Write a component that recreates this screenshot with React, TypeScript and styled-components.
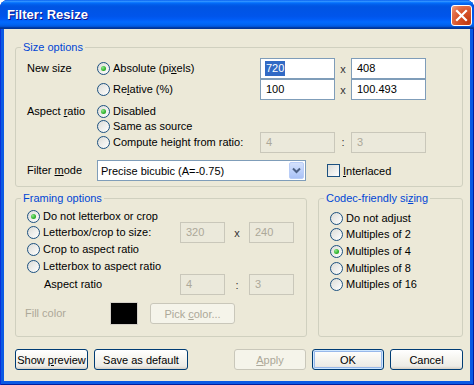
import styled, { createGlobalStyle } from 'styled-components'

const GlobalStyle = createGlobalStyle`
  html, body {
    margin: 0;
    padding: 0;
    background: #ffffff;
  }
  body {
    font-family: Tahoma, 'Liberation Sans', Arial, sans-serif;
    font-size: 11px;
    color: #000;
  }
  * {
    box-sizing: border-box;
  }
`

const Window = styled.div`
  width: 474px;
  height: 385px;
  display: flex;
  flex-direction: column;
  background: #0b5ae4;
  border-radius: 8px 8px 0 0;
  overflow: hidden;
  box-shadow: inset 1px 0 #0831d9, inset -1px 0 #001ea0, inset 0 -1px #001ea0;
`

const TitleBar = styled.div`
  height: 29px;
  flex: none;
  display: flex;
  align-items: center;
  justify-content: space-between;
  padding: 0 2px 0 7px;
  background: linear-gradient(
    180deg,
    #0058ee 0%,
    #3593ff 4%,
    #288eff 6%,
    #127dff 8%,
    #036ffc 10%,
    #0262ee 14%,
    #0057e5 20%,
    #0054e3 24%,
    #0055eb 56%,
    #005bf5 66%,
    #026afe 76%,
    #0062ef 86%,
    #0052d6 92%,
    #0040ab 94%,
    #003092 100%
  );
`

const Title = styled.span`
  color: #fff;
  font-family: 'Trebuchet MS', 'Liberation Sans', Arial, sans-serif;
  font-weight: bold;
  font-size: 13px;
  text-shadow: 1px 1px #0f1089;
`

const CloseButton = styled.div`
  width: 21px;
  height: 21px;
  margin-top: 1px;
  border: 1px solid #fff;
  border-radius: 3px;
  display: flex;
  align-items: center;
  justify-content: center;
  background: radial-gradient(circle at 85% 85%, #c23a10 0%, #d9552b 50%, #e3714c 75%, #f2a689 100%);
`

const Client = styled.div`
  flex: 1;
  margin: 0 4px 4px;
  background: #ece9d8;
  padding: 12px 7px 0 11px;
  display: flex;
  flex-direction: column;
`

const Group = styled.fieldset<{ $pad: string }>`
  margin: 0;
  min-width: 0;
  border: 1px solid #d0d0bf;
  border-radius: 3px;
  padding: ${({ $pad }) => $pad};
`

const Legend = styled.legend`
  margin-left: -6px;
  padding: 0 2px;
  color: #0046d5;
  line-height: 13px;
  font-size: 11px;
`

const SizeGrid = styled.div<{ $rows: string; $mt?: number }>`
  display: grid;
  grid-template-columns: 70px 163px 75px 16px 75px;
  grid-template-rows: ${({ $rows }) => $rows};
  align-items: center;
  margin-top: ${({ $mt }) => $mt ?? 0}px;
`

const FramingGrid = styled.div`
  display: grid;
  grid-template-columns: 153px 45px 24px 45px;
  grid-template-rows: 16px 17px 17px 16px 21px;
  align-items: center;
`

const CodecList = styled.div`
  display: grid;
  grid-template-rows: 16px 17px 17px 16px 17px;
  align-items: center;
`

const Label = styled.span<{ $disabled?: boolean; $indent?: number; $w?: number }>`
  white-space: nowrap;
  line-height: 13px;
  padding-left: ${({ $indent }) => $indent ?? 0}px;
  width: ${({ $w }) => ($w ? `${$w}px` : 'auto')};
  flex: none;
  color: ${({ $disabled }) => ($disabled ? '#aca899' : '#000')};
`

const Sep = styled.span`
  text-align: center;
  color: #333;
`

const Option = styled.label<{ $span?: string }>`
  display: flex;
  align-items: center;
  gap: 3px;
  white-space: nowrap;
  line-height: 13px;
  grid-column: ${({ $span }) => $span ?? 'auto'};
`

const RadioDot = styled.span<{ $checked?: boolean }>`
  position: relative;
  flex: none;
  width: 13px;
  height: 13px;
  border-radius: 50%;
  border: 1px solid #1c5180;
  background: linear-gradient(135deg, #dcdcd7 0%, #ffffff 100%);

  &::after {
    content: '';
    display: ${({ $checked }) => ($checked ? 'block' : 'none')};
    position: absolute;
    left: 3px;
    top: 3px;
    width: 5px;
    height: 5px;
    border-radius: 50%;
    background: radial-gradient(circle at 35% 35%, #8ee68b 0%, #2fb32c 60%, #1e8f1c 100%);
  }
`

const CheckBox = styled.span`
  flex: none;
  width: 13px;
  height: 13px;
  border: 1px solid #1c5180;
  background: linear-gradient(135deg, #dcdcd7 0%, #ffffff 100%);
`

const Field = styled.div<{ $disabled?: boolean }>`
  height: 21px;
  border: 1px solid ${({ $disabled }) => ($disabled ? '#c9c7ba' : '#7f9db9')};
  background: ${({ $disabled }) => ($disabled ? '#ebe9db' : '#fff')};
  color: ${({ $disabled }) => ($disabled ? '#aca899' : '#000')};
  line-height: 19px;
  padding-left: 5px;
  white-space: nowrap;
`

const Selected = styled.span`
  background: #316ac5;
  color: #fff;
  margin-left: -1px;
  padding: 1px 1px 2px;
`

const FilterRow = styled.div`
  grid-column: 2 / -1;
  display: flex;
  align-items: center;
`

const Combo = styled.div`
  width: 209px;
  height: 21px;
  border: 1px solid #7f9db9;
  background: #fff;
  display: flex;
  align-items: center;
  justify-content: space-between;
  padding: 1px 1px 1px 3px;
`

const ComboArrow = styled.div`
  width: 15px;
  height: 17px;
  border: 1px solid #b9cdf7;
  border-radius: 2px;
  background: linear-gradient(180deg, #d4e1fc 0%, #bcd0fa 55%, #aac2f6 100%);
  display: flex;
  align-items: center;
  justify-content: center;
`

const CheckOption = styled.label`
  display: flex;
  align-items: center;
  gap: 3px;
  margin-left: 21px;
`

const BottomRow = styled.div`
  display: grid;
  grid-template-columns: 292px 1fr;
  gap: 11px;
  margin-top: 5px;
`

const FillRow = styled.div`
  display: flex;
  align-items: center;
  height: 23px;
  margin-top: 7px;
  margin-left: -2px;
`

const Swatch = styled.div`
  width: 28px;
  height: 23px;
  background: #000;
  border: 1px solid #d4d0c8;
  margin-right: 12px;
`

const ButtonRow = styled.div`
  display: flex;
  justify-content: space-between;
  margin-top: 12px;
`

const ButtonGroup = styled.div`
  display: flex;
  gap: 6px;
`

const Button = styled.button<{ $w: number; $primary?: boolean }>`
  width: ${({ $w }) => $w}px;
  height: 21px;
  padding: 0;
  font: inherit;
  color: #000;
  border: 1px solid #003c74;
  border-radius: 3px;
  background: linear-gradient(180deg, #ffffff 0%, #f6f5f0 45%, #ecebe6 85%, #d6d0c5 100%);
  box-shadow: ${({ $primary }) =>
    $primary ? 'inset 0 0 0 1px #cee7ff, inset 0 0 0 2px #98b8ea' : 'none'};

  &:disabled {
    border-color: #c9c7ba;
    color: #aca899;
    background: #f5f4ea;
    box-shadow: none;
  }
`

function Radio({ checked, span, children }: { checked?: boolean; span?: string; children: React.ReactNode }) {
  return (
    <Option $span={span}>
      <RadioDot $checked={checked} />
      <span>{children}</span>
    </Option>
  )
}

export default function App() {
  return (
    <>
      <GlobalStyle />
      <Window>
        <TitleBar>
          <Title>Filter: Resize</Title>
          <CloseButton>
            <svg width="13" height="13" viewBox="0 0 13 13">
              <path d="M2 2 L11 11 M11 2 L2 11" stroke="#fff" strokeWidth="2.2" strokeLinecap="square" />
            </svg>
          </CloseButton>
        </TitleBar>
        <Client>
          <Group $pad="4px 0 5px 11px">
            <Legend>Size options</Legend>
            <SizeGrid $rows="21px 21px">
              <Label>New size</Label>
              <Radio checked>
                Absolute (pi<u>x</u>els)
              </Radio>
              <Field>
                <Selected>720</Selected>
              </Field>
              <Sep>x</Sep>
              <Field>408</Field>
              <span />
              <Radio>
                Re<u>l</u>ative (%)
              </Radio>
              <Field>100</Field>
              <Sep>x</Sep>
              <Field>100.493</Field>
            </SizeGrid>
            <SizeGrid $rows="15px 15px 16px" $mt={4}>
              <Label>
                Aspect <u>r</u>atio
              </Label>
              <Radio checked span="2 / -1">
                Disabled
              </Radio>
              <span />
              <Radio span="2 / -1">Same as source</Radio>
              <span />
              <Radio>Compute height from ratio:</Radio>
              <Field $disabled>4</Field>
              <Sep>:</Sep>
              <Field $disabled>3</Field>
            </SizeGrid>
            <SizeGrid $rows="21px" $mt={10}>
              <Label>
                Filter <u>m</u>ode
              </Label>
              <FilterRow>
                <Combo>
                  <span>Precise bicubic (A=-0.75)</span>
                  <ComboArrow>
                    <svg width="9" height="7" viewBox="0 0 9 7">
                      <polyline points="1,1.5 4.5,5 8,1.5" fill="none" stroke="#4d6185" strokeWidth="2" />
                    </svg>
                  </ComboArrow>
                </Combo>
                <CheckOption>
                  <CheckBox />
                  <span>
                    <u>I</u>nterlaced
                  </span>
                </CheckOption>
              </FilterRow>
            </SizeGrid>
          </Group>

          <BottomRow>
            <Group $pad="3px 0 11px 11px">
              <Legend>Framing options</Legend>
              <FramingGrid>
                <Radio checked span="1 / -1">
                  Do not letterbox or crop
                </Radio>
                <Radio>Letterbox/crop to size:</Radio>
                <Field $disabled>320</Field>
                <Sep>x</Sep>
                <Field $disabled>240</Field>
                <Radio span="1 / -1">Crop to aspect ratio</Radio>
                <Radio span="1 / -1">Letterbox to aspect ratio</Radio>
                <Label $indent={17}>Aspect ratio</Label>
                <Field $disabled>4</Field>
                <Sep>:</Sep>
                <Field $disabled>3</Field>
              </FramingGrid>
              <FillRow>
                <Label $disabled $w={85}>
                  Fill color
                </Label>
                <Swatch />
                <Button $w={85} disabled>
                  Pick <u>c</u>olor...
                </Button>
              </FillRow>
            </Group>

            <Group $pad="5px 0 0 11px">
              <Legend>
                Codec-friendly si<u>z</u>ing
              </Legend>
              <CodecList>
                <Radio>Do not adjust</Radio>
                <Radio>Multiples of 2</Radio>
                <Radio checked>Multiples of 4</Radio>
                <Radio>Multiples of 8</Radio>
                <Radio>Multiples of 16</Radio>
              </CodecList>
            </Group>
          </BottomRow>

          <ButtonRow>
            <ButtonGroup>
              <Button $w={73}>
                Show <u>p</u>review
              </Button>
              <Button $w={94}>Save as default</Button>
            </ButtonGroup>
            <ButtonGroup>
              <Button $w={72} disabled>
                <u>A</u>pply
              </Button>
              <Button $w={72} $primary>
                OK
              </Button>
              <Button $w={73}>Cancel</Button>
            </ButtonGroup>
          </ButtonRow>
        </Client>
      </Window>
    </>
  )
}
